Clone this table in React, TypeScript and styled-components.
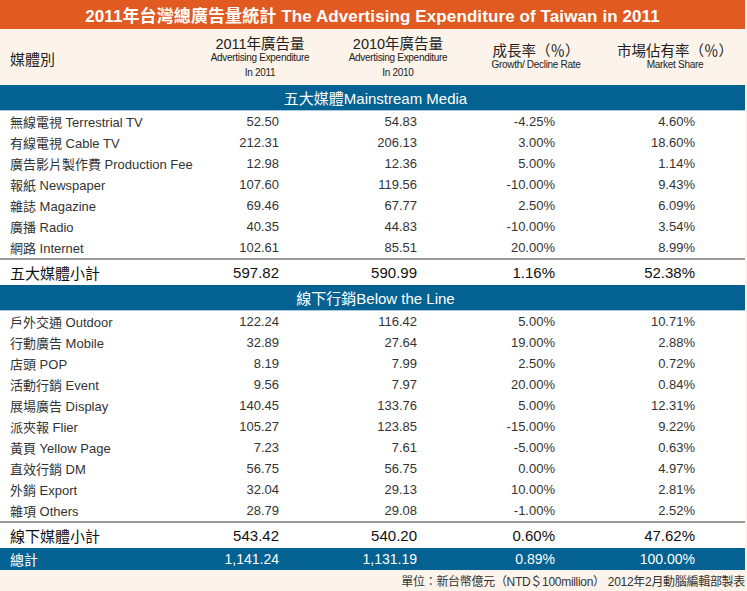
import React from "react";
import styled, { createGlobalStyle } from "styled-components";

const Global = createGlobalStyle`
  html, body { margin: 0; padding: 0; background: #fcf3ea; }
  body { font-family: "Liberation Sans", Arial, "Noto Sans CJK TC", sans-serif; }
`;

const FONT = `"Liberation Sans", Arial, "Noto Sans CJK TC", sans-serif`;
const COLS = "191px 138px 138px 138px 140px";
const BLUE = "#036291";

const Page = styled.div`
  width: 747px;
  height: 591px;
  background: #fcf3ea;
  font-family: ${FONT};
  overflow: hidden;
`;

const Table = styled.div`
  width: 745px;
  display: flex;
  flex-direction: column;
`;

const TitleBar = styled.div`
  height: 29px;
  background: #e05a21;
  color: #fff;
  font-weight: bold;
  font-size: 17px;
  display: flex;
  align-items: center;
  justify-content: center;
  letter-spacing: 0.1px;
`;

const HeaderRow = styled.div`
  height: 56px;
  display: grid;
  grid-template-columns: ${COLS};
  align-items: center;
  color: #222;
`;

const HeadLabel = styled.div`
  padding-left: 10px;
  font-size: 15px;
  padding-top: 2px;
`;

const HeadCell = styled.div`
  display: flex;
  flex-direction: column;
  align-items: center;
  text-align: center;
`;

const HeadMain = styled.div`
  font-size: 14.5px;
  line-height: 16px;
`;

const HeadSub = styled.div<{ $gap?: number }>`
  font-size: 10px;
  line-height: 12px;
  letter-spacing: -0.3px;
  margin-top: ${(p) => p.$gap ?? 0}px;
`;

const SectionBar = styled.div<{ $h: number }>`
  height: ${(p) => p.$h}px;
  background: ${BLUE};
  border-bottom: 1px solid #a9c6dc;
  color: #fff;
  font-size: 15px;
  display: flex;
  align-items: center;
  justify-content: center;
  padding-left: 6px;
`;

const Row = styled.div<{ $h: number; $size: number; $color: string; $bg: string }>`
  height: ${(p) => p.$h}px;
  display: grid;
  grid-template-columns: ${COLS};
  align-items: center;
  background: ${(p) => p.$bg};
  color: ${(p) => p.$color};
  font-size: ${(p) => p.$size}px;
`;

const Label = styled.div`
  padding-left: 10px;
  white-space: nowrap;
`;

const Num = styled.div`
  text-align: right;
  padding-right: 50px;
  white-space: nowrap;
`;

const Rule = styled.div`
  height: 2px;
  background: #9a9a9a;
`;

const Footer = styled.div`
  height: 21px;
  display: flex;
  align-items: center;
  justify-content: flex-end;
  padding-right: 2px;
  font-size: 12px;
  color: #333;
  letter-spacing: -0.3px;
`;

type R = [string, string, string, string, string];

const main: R[] = [
  ["無線電視 Terrestrial TV", "52.50", "54.83", "-4.25%", "4.60%"],
  ["有線電視 Cable TV", "212.31", "206.13", "3.00%", "18.60%"],
  ["廣告影片製作費 Production Fee", "12.98", "12.36", "5.00%", "1.14%"],
  ["報紙 Newspaper", "107.60", "119.56", "-10.00%", "9.43%"],
  ["雜誌 Magazine", "69.46", "67.77", "2.50%", "6.09%"],
  ["廣播 Radio", "40.35", "44.83", "-10.00%", "3.54%"],
  ["網路 Internet", "102.61", "85.51", "20.00%", "8.99%"],
];

const btl: R[] = [
  ["戶外交通 Outdoor", "122.24", "116.42", "5.00%", "10.71%"],
  ["行動廣告 Mobile", "32.89", "27.64", "19.00%", "2.88%"],
  ["店頭 POP", "8.19", "7.99", "2.50%", "0.72%"],
  ["活動行銷 Event", "9.56", "7.97", "20.00%", "0.84%"],
  ["展場廣告 Display", "140.45", "133.76", "5.00%", "12.31%"],
  ["派夾報 Flier", "105.27", "123.85", "-15.00%", "9.22%"],
  ["黃頁 Yellow Page", "7.23", "7.61", "-5.00%", "0.63%"],
  ["直效行銷 DM", "56.75", "56.75", "0.00%", "4.97%"],
  ["外銷 Export", "32.04", "29.13", "10.00%", "2.81%"],
  ["雜項 Others", "28.79", "29.08", "-1.00%", "2.52%"],
];

const DataRow = ({ r, h = 21, size = 13, color = "#333", bg = "#fff" }: { r: R; h?: number; size?: number; color?: string; bg?: string }) => (
  <Row $h={h} $size={size} $color={color} $bg={bg}>
    <Label>{r[0]}</Label>
    <Num>{r[1]}</Num>
    <Num>{r[2]}</Num>
    <Num>{r[3]}</Num>
    <Num>{r[4]}</Num>
  </Row>
);

export default function App() {
  return (
    <Page>
      <Global />
      <Table>
        <TitleBar>2011年台灣總廣告量統計 The Advertising Expenditure of Taiwan in 2011</TitleBar>
        <HeaderRow>
          <HeadLabel>媒體別</HeadLabel>
          <HeadCell>
            <HeadMain>2011年廣告量</HeadMain>
            <HeadSub>Advertising Expenditure</HeadSub>
            <HeadSub $gap={3}>In 2011</HeadSub>
          </HeadCell>
          <HeadCell>
            <HeadMain>2010年廣告量</HeadMain>
            <HeadSub>Advertising Expenditure</HeadSub>
            <HeadSub $gap={3}>In 2010</HeadSub>
          </HeadCell>
          <HeadCell>
            <HeadMain>成長率（％）</HeadMain>
            <HeadSub>Growth/ Decline Rate</HeadSub>
          </HeadCell>
          <HeadCell>
            <HeadMain>市場佔有率（％）</HeadMain>
            <HeadSub>Market Share</HeadSub>
          </HeadCell>
        </HeaderRow>
        <SectionBar $h={25}>五大媒體Mainstream Media</SectionBar>
        {main.map((r) => (
          <DataRow key={r[0]} r={r} />
        ))}
        <Rule />
        <DataRow r={["五大媒體小計", "597.82", "590.99", "1.16%", "52.38%"]} h={25} size={15} color="#111" />
        <SectionBar $h={25}>線下行銷Below the Line</SectionBar>
        {btl.map((r) => (
          <DataRow key={r[0]} r={r} />
        ))}
        <Rule />
        <DataRow r={["線下媒體小計", "543.42", "540.20", "0.60%", "47.62%"]} h={25} size={15} color="#111" />
        <DataRow r={["總計", "1,141.24", "1,131.19", "0.89%", "100.00%"]} h={22} size={14} color="#fff" bg={BLUE} />
      </Table>
      <Footer>單位：新台幣億元（NTD＄100million） 2012年2月動腦編輯部製表</Footer>
    </Page>
  );
}
